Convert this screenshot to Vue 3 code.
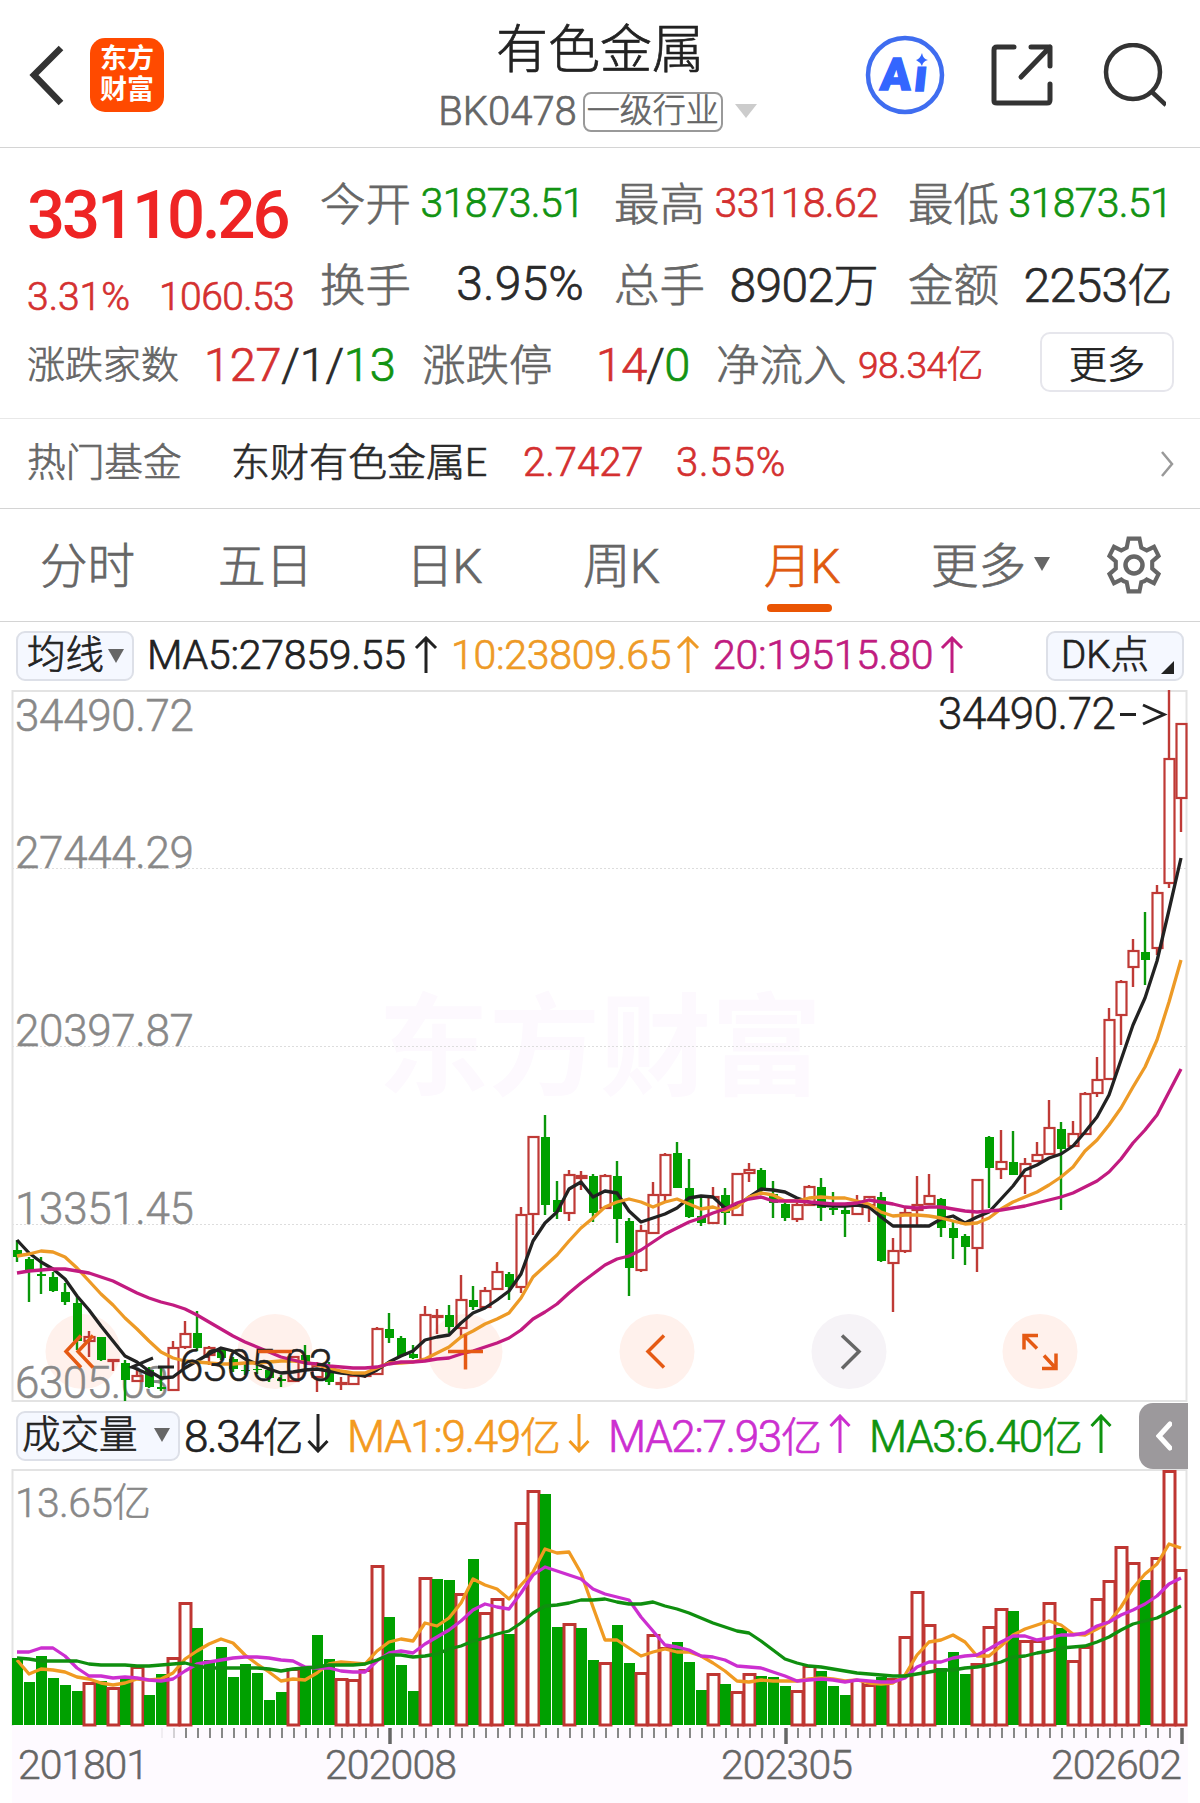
<script setup>
import { ref } from 'vue'

const stats = [
  { label: '今开', value: '31873.51', color: 'green', small: true },
  { label: '最高', value: '33118.62', color: 'red', small: true },
  { label: '最低', value: '31873.51', color: 'green', small: true },
  { label: '换手', value: '3.95%', wide: true },
  { label: '总手', value: '8902', unit: '万' },
  { label: '金额', value: '2253', unit: '亿' }
]

const tabs = [
  { name: 'minute', label: '分时' },
  { name: 'five', label: '五日' },
  { name: 'day', label: '日K' },
  { name: 'week', label: '周K' },
  { name: 'month', label: '月K' },
  { name: 'more', label: '更多', caret: true }
]
const selectedTab = ref('month')

const maList = [
  { text: 'MA5:27859.55', color: '#222', width: 267 },
  { text: '10:23809.65', color: '#ee9a26', width: 225 },
  { text: '20:19515.80', color: '#c01c80', width: 227 }
]

const volList = [
  { text: '8.34', color: '#222', width: 123, down: true },
  { text: 'MA1:9.49', color: '#f39a1e', width: 221, down: true },
  { text: 'MA2:7.93', color: '#cc2fd0', width: 221 },
  { text: 'MA3:6.40', color: '#0f930f', width: 221 }
]

// up flag, high, body top, body bottom, low
const candles = [
  [0, 1240, 1250, 1257, 1262], [0, 1257, 1259, 1271, 1302], [0, 1257, 1274, 1276, 1294], [0, 1272, 1277, 1291, 1292],
  [0, 1283, 1292, 1302, 1305], [0, 1297, 1303, 1341, 1350], [1, 1331, 1337, 1341, 1357], [0, 1337, 1337, 1360, 1361],
  [1, 1359, 1360, 1361, 1371], [0, 1360, 1363, 1380, 1401], [1, 1370, 1376, 1381, 1382], [0, 1367, 1370, 1387, 1388],
  [0, 1366, 1387, 1389, 1391], [1, 1341, 1348, 1390, 1390], [1, 1321, 1334, 1347, 1349], [0, 1311, 1333, 1348, 1351],
  [1, 1346, 1348, 1355, 1365], [0, 1348, 1349, 1358, 1360], [0, 1357, 1359, 1369, 1372], [0, 1364, 1370, 1371, 1375],
  [0, 1363, 1369, 1370, 1374], [0, 1367, 1370, 1378, 1382], [0, 1375, 1379, 1381, 1387], [1, 1356, 1357, 1381, 1382],
  [0, 1345, 1355, 1362, 1364], [1, 1362, 1366, 1377, 1392], [0, 1362, 1371, 1382, 1385], [1, 1377, 1383, 1384, 1390],
  [1, 1375, 1376, 1384, 1385], [1, 1374, 1375, 1376, 1378], [1, 1327, 1329, 1374, 1374], [0, 1313, 1329, 1338, 1343],
  [0, 1336, 1338, 1356, 1357], [0, 1345, 1354, 1358, 1359], [1, 1306, 1315, 1359, 1359], [1, 1309, 1316, 1317, 1334],
  [0, 1305, 1315, 1327, 1333], [1, 1275, 1300, 1328, 1338], [0, 1286, 1300, 1307, 1310], [1, 1287, 1291, 1307, 1307],
  [1, 1262, 1272, 1289, 1289], [0, 1272, 1274, 1287, 1300], [1, 1207, 1215, 1287, 1293], [1, 1137, 1137, 1214, 1235],
  [0, 1115, 1137, 1205, 1215], [0, 1181, 1200, 1212, 1219], [1, 1170, 1175, 1213, 1221], [1, 1171, 1176, 1178, 1190],
  [0, 1174, 1176, 1213, 1222], [1, 1174, 1176, 1208, 1209], [0, 1161, 1176, 1219, 1243], [0, 1218, 1221, 1268, 1296],
  [1, 1225, 1231, 1270, 1272], [1, 1182, 1195, 1233, 1234], [1, 1153, 1155, 1195, 1201], [0, 1142, 1153, 1188, 1188],
  [0, 1159, 1188, 1217, 1218], [0, 1197, 1216, 1223, 1226], [1, 1187, 1197, 1223, 1224], [0, 1188, 1195, 1213, 1225],
  [1, 1174, 1174, 1215, 1215], [1, 1163, 1170, 1173, 1182], [0, 1168, 1170, 1190, 1193], [0, 1181, 1194, 1203, 1218],
  [0, 1202, 1204, 1218, 1221], [1, 1200, 1205, 1219, 1222], [1, 1185, 1187, 1205, 1206], [0, 1178, 1187, 1208, 1221],
  [0, 1192, 1208, 1210, 1215], [0, 1206, 1210, 1214, 1237], [1, 1195, 1205, 1214, 1215], [1, 1196, 1197, 1205, 1222],
  [0, 1192, 1197, 1261, 1262], [1, 1238, 1251, 1263, 1312], [1, 1208, 1213, 1251, 1253], [1, 1176, 1205, 1210, 1227],
  [1, 1174, 1196, 1204, 1205], [0, 1198, 1199, 1228, 1237], [0, 1220, 1228, 1238, 1259], [0, 1234, 1236, 1247, 1265],
  [1, 1180, 1180, 1248, 1272], [0, 1136, 1137, 1168, 1208], [1, 1130, 1162, 1169, 1179], [0, 1131, 1162, 1175, 1175],
  [1, 1158, 1164, 1176, 1194], [1, 1142, 1155, 1161, 1162], [1, 1100, 1128, 1154, 1154], [0, 1122, 1129, 1149, 1210],
  [1, 1121, 1134, 1146, 1147], [1, 1092, 1094, 1134, 1134], [1, 1057, 1080, 1093, 1097], [1, 1008, 1020, 1079, 1079],
  [1, 980, 982, 1015, 1045], [1, 939, 951, 967, 987], [0, 912, 952, 960, 985], [1, 885, 893, 948, 955],
  [1, 690, 759, 883, 888], [1, 724, 724, 798, 832]
]

const ma5 = [
  1240, 1253, 1262, 1269, 1279, 1296, 1310, 1326, 1341, 1356, 1362, 1371, 1378, 1377, 1368, 1361, 1354, 1348, 1351, 1359,
  1364, 1369, 1373, 1372, 1370, 1369, 1371, 1373, 1374, 1376, 1370, 1362, 1356, 1351, 1340, 1337, 1335, 1323, 1313, 1308,
  1300, 1291, 1274, 1241, 1223, 1212, 1189, 1182, 1197, 1191, 1193, 1211, 1222, 1218, 1214, 1208, 1198, 1196, 1197, 1208,
  1206, 1197, 1189, 1190, 1192, 1198, 1202, 1205, 1206, 1206, 1205, 1207, 1217, 1226, 1226, 1226, 1226, 1219, 1216, 1223,
  1217, 1212, 1199, 1186, 1170, 1165, 1158, 1154, 1146, 1132, 1117, 1095, 1060, 1025, 998, 961, 910, 858
]
const ma10 = [
  1256, 1254, 1251, 1252, 1257, 1268, 1281, 1294, 1305, 1318, 1329, 1341, 1352, 1358, 1361, 1362, 1363, 1364, 1364, 1363,
  1363, 1362, 1361, 1361, 1362, 1365, 1368, 1371, 1373, 1373, 1368, 1363, 1363, 1362, 1359, 1353, 1347, 1337, 1331, 1324,
  1319, 1313, 1298, 1277, 1266, 1255, 1241, 1228, 1218, 1207, 1202, 1199, 1202, 1207, 1202, 1199, 1204, 1209, 1207, 1211,
  1207, 1197, 1193, 1195, 1201, 1201, 1198, 1197, 1198, 1198, 1201, 1204, 1212, 1216, 1215, 1215, 1216, 1218, 1221, 1224,
  1223, 1218, 1209, 1202, 1197, 1192, 1185, 1177, 1167, 1151, 1140, 1125, 1108, 1087, 1067, 1040, 1002, 960
]
const ma20 = [
  1273, 1271, 1270, 1269, 1269, 1271, 1273, 1277, 1281, 1287, 1293, 1298, 1302, 1305, 1309, 1315, 1322, 1329, 1336, 1342,
  1347, 1352, 1357, 1360, 1363, 1364, 1366, 1367, 1368, 1368, 1367, 1364, 1362, 1362, 1361, 1359, 1358, 1354, 1351, 1347,
  1343, 1338, 1330, 1319, 1312, 1304, 1293, 1283, 1274, 1265, 1259, 1256, 1250, 1242, 1234, 1228, 1222, 1218, 1213, 1209,
  1203, 1199, 1197, 1201, 1201, 1201, 1202, 1203, 1204, 1204, 1203, 1200, 1202, 1204, 1207, 1208, 1207, 1207, 1209, 1211,
  1212, 1211, 1210, 1208, 1206, 1203, 1200, 1197, 1193, 1187, 1181, 1172, 1159, 1143, 1130, 1115, 1092, 1069
]

// top of each volume bar, and whether it is a rising month
const volTops = [
  1658, 1682, 1656, 1678, 1685, 1691, 1682, 1681, 1687, 1677, 1666, 1695, 1674, 1657, 1602, 1628, 1660, 1647, 1677, 1664,
  1673, 1700, 1692, 1668, 1669, 1635, 1659, 1678, 1679, 1669, 1565, 1617, 1665, 1691, 1577, 1579, 1580, 1593, 1559, 1612,
  1598, 1634, 1522, 1490, 1494, 1627, 1623, 1628, 1660, 1662, 1625, 1663, 1672, 1634, 1647, 1642, 1662, 1690, 1673, 1684,
  1691, 1673, 1676, 1677, 1686, 1690, 1665, 1671, 1686, 1695, 1679, 1684, 1677, 1678, 1636, 1591, 1624, 1668, 1652, 1674,
  1663, 1626, 1608, 1611, 1640, 1640, 1602, 1628, 1660, 1646, 1598, 1580, 1546, 1562, 1580, 1557, 1470, 1569
]
const volUp = [
  6, 8, 10, 13, 14, 23, 27, 28, 29, 30, 34, 37, 39, 40, 42, 43, 46, 49, 52, 53, 54, 58, 60, 61, 65, 66, 70, 71, 73, 74, 75,
  76, 80, 81, 82, 84, 85, 86, 88, 89, 90, 91, 92, 93, 95, 96, 97
]
const volMa1 = [
  1660, 1674, 1669, 1670, 1672, 1677, 1679, 1683, 1685, 1683, 1679, 1680, 1679, 1673, 1659, 1651, 1644, 1639, 1643, 1655,
  1664, 1672, 1681, 1679, 1680, 1673, 1664, 1662, 1663, 1664, 1651, 1642, 1639, 1641, 1623, 1626, 1618, 1603, 1579, 1585,
  1589, 1599, 1585, 1572, 1549, 1553, 1552, 1573, 1607, 1640, 1640, 1648, 1656, 1652, 1649, 1652, 1652, 1656, 1663, 1671,
  1681, 1682, 1680, 1681, 1681, 1681, 1679, 1678, 1679, 1681, 1680, 1683, 1684, 1683, 1675, 1655, 1642, 1640, 1635, 1642,
  1656, 1656, 1646, 1635, 1629, 1625, 1621, 1625, 1634, 1635, 1629, 1622, 1607, 1588, 1574, 1564, 1544, 1548
]
const volMa2 = [
  1652, 1652, 1648, 1648, 1656, 1668, 1676, 1676, 1678, 1677, 1678, 1680, 1681, 1679, 1671, 1664, 1662, 1660, 1658, 1657,
  1657, 1658, 1660, 1661, 1667, 1668, 1668, 1671, 1672, 1672, 1661, 1653, 1651, 1653, 1644, 1637, 1630, 1621, 1610, 1604,
  1607, 1609, 1593, 1575, 1567, 1571, 1575, 1579, 1589, 1594, 1597, 1600, 1617, 1631, 1645, 1647, 1650, 1656, 1657, 1660,
  1666, 1667, 1668, 1672, 1676, 1681, 1680, 1679, 1680, 1682, 1680, 1681, 1682, 1682, 1678, 1667, 1662, 1662, 1658, 1656,
  1655, 1649, 1642, 1636, 1636, 1640, 1638, 1635, 1635, 1633, 1626, 1622, 1615, 1610, 1604, 1596, 1584, 1578
]
const volMa3 = [
  1658, 1659, 1661, 1661, 1661, 1661, 1664, 1665, 1665, 1665, 1666, 1666, 1665, 1664, 1663, 1666, 1668, 1668, 1668, 1668,
  1668, 1669, 1671, 1669, 1668, 1667, 1665, 1665, 1665, 1664, 1660, 1655, 1655, 1657, 1656, 1654, 1649, 1646, 1641, 1638,
  1634, 1631, 1623, 1613, 1606, 1605, 1603, 1600, 1600, 1599, 1602, 1604, 1604, 1602, 1606, 1609, 1613, 1618, 1623, 1627,
  1631, 1633, 1641, 1650, 1659, 1663, 1666, 1667, 1669, 1671, 1673, 1674, 1675, 1676, 1676, 1674, 1672, 1670, 1670, 1668,
  1667, 1665, 1662, 1657, 1656, 1653, 1651, 1648, 1647, 1646, 1642, 1637, 1630, 1624, 1621, 1618, 1612, 1606
]

const cx = (i) => 17 + i * 12
const line = (values) => values.map((y, i) => `${cx(i)},${y}`).join(' ')

const priceLabels = [
  { text: '34490.72', y: 731, w: 176 },
  { text: '27444.29', y: 868, w: 176 },
  { text: '20397.87', y: 1046, w: 176 },
  { text: '13351.45', y: 1224, w: 176 },
  { text: '6305.03', y: 1398, w: 151 }
]

const tools = [
  { x: 83, path: 'M-2 -16L-17 0L-2 16M10 -16L-5 0L10 16' },
  { x: 275, path: 'M-17 0H17' },
  { x: 465, path: 'M-17 0H18M0.5 -17V18' },
  { x: 657, path: 'M7 -16L-9 0L7 16' },
  { x: 849, path: 'M-7 -16L10 0L-7 17', muted: true },
  { x: 1040, path: 'M-16 -2V-16H-2M-16 -16L-3 -3M2 17H16V2M4 4L16 17' }
]

const ticks = Array.from({ length: 86 }, (_, i) => i + 12)
const majorTicks = [31, 64, 97]
</script>

<template>
  <div class="page">
    <header class="header">
      <div class="header__left">
        <svg class="header__back" width="40" height="64" viewBox="0 0 40 64">
          <path d="M35 5L8 32L35 60" fill="none" stroke="#333" stroke-width="6.5" />
        </svg>
        <div class="logo"><span>东方</span><span>财富</span></div>
      </div>
      <div class="header__title">
        <h1>有色金属</h1>
        <div class="header__sub">
          <span>BK0478</span>
          <span class="tag">一级行业</span>
          <svg width="24" height="16" viewBox="0 0 24 16"><path d="M1 1H23L12 15Z" fill="#ccc" /></svg>
        </div>
      </div>
      <div class="header__icons">
        <svg width="80" height="80" viewBox="0 0 80 80">
          <circle cx="40" cy="40" r="37" fill="none" stroke="#3f6df0" stroke-width="4.5" />
          <text class="ai" transform="translate(14.500 55) skewX(-4)">A</text>
          <text class="ai" transform="translate(48 56) skewX(-6)">ı</text>
          <path fill="#3366ff" d="M57 18Q58 24 63 25Q58 26 57 31Q55 27 51 25Q55 24 57 18Z" />
        </svg>
        <svg width="64" height="64" viewBox="0 0 64 64">
          <g fill="none" stroke="#333" stroke-width="5" stroke-linecap="round" stroke-linejoin="round">
            <path d="M24 4H7Q4 4 4 7V58Q4 60 7 60H57Q60 60 60 57V41" />
            <path d="M41 4H60V23M60 4L31 34" />
          </g>
        </svg>
        <svg width="64" height="64" viewBox="0 0 64 64">
          <g fill="none" stroke="#333" stroke-width="4.500">
            <circle cx="31" cy="29" r="27" />
            <path d="M50 49L64 62" />
          </g>
        </svg>
      </div>
    </header>

    <section class="quote">
      <div class="quote__top">
        <div class="price">
          <div class="price__now">33110.26</div>
          <div class="price__change"><span>3.31%</span><span class="price__diff">1060.53</span></div>
        </div>
        <div class="stats">
          <div v-for="item in stats" :key="item.label" class="stats__item">
            <span class="stats__label">{{ item.label }}</span>
            <span :class="['stats__value', item.color, { small: item.small, wide: item.wide }]"
              >{{ item.value }}<i v-if="item.unit">{{ item.unit }}</i></span
            >
          </div>
        </div>
      </div>
      <div class="quote__bottom">
        <span class="count-label">涨跌家数</span>
        <span class="count"><b class="red">127</b>/1/<b class="green">13</b></span>
        <span class="limit-label">涨跌停</span>
        <span class="limit"><b class="red">14</b>/<b class="green">0</b></span>
        <span class="limit-label flow-label">净流入</span>
        <span class="flow red">98.34<i>亿</i></span>
        <button class="more">更多</button>
      </div>
    </section>

    <section class="fund">
      <span class="fund__label">热门基金</span>
      <span class="fund__name">东财有色金属E</span>
      <span class="fund__net red">2.7427</span>
      <span class="fund__rate red">3.55%</span>
      <svg class="fund__arrow" width="14" height="28" viewBox="0 0 14 28">
        <path d="M2 2L12 14L2 26" fill="none" stroke="#999" stroke-width="2.500" />
      </svg>
    </section>

    <nav class="tabs">
      <span
        v-for="tab in tabs"
        :key="tab.name"
        :class="['tabs__item', `tabs__item--${tab.name}`, { selected: tab.name === selectedTab }]"
        @click="selectedTab = tab.name"
        >{{ tab.label }}<svg v-if="tab.caret" class="tabs__caret" width="18" height="14" viewBox="0 0 18 14">
          <path d="M1 0H17L9 14Z" fill="#666" />
        </svg>
      </span>
      <svg class="tabs__gear" width="56" height="64" viewBox="-28 -32 56 64">
        <g fill="none" stroke="#666" stroke-width="4.500">
          <path
            d="M-6 -29H6L8 -19Q12 -17 14 -16L22 -20L27 -10L20 -4V4L27 10L22 20L14 16Q12 18 8 19L6 29H-6L-8 19Q-12 18 -14 16L-22 20L-27 10L-20 4V-4L-27 -10L-22 -20L-14 -16Q-12 -17 -8 -19Z"
            transform="scale(0.910)"
          />
          <circle r="8.500" />
        </g>
      </svg>
    </nav>

    <div class="indicator">
      <span class="pill pill--ma">均线<svg width="16" height="14" viewBox="0 0 16 14"><path d="M0 0H16L8 14Z" fill="#666" /></svg></span>
      <span v-for="ma in maList" :key="ma.text" class="indicator__ma" :style="{ color: ma.color }">
        <span :style="{ width: ma.width + 'px' }">{{ ma.text }}</span>
        <svg width="24" height="38" viewBox="0 0 24 38">
          <path d="M12 37V2M2 12L12 2L22 12" fill="none" stroke="currentColor" stroke-width="3" />
        </svg>
      </span>
      <span class="pill pill--dk">DK点<svg width="13" height="13" viewBox="0 0 13 13"><path d="M13 0V13H0Z" fill="#222" /></svg></span>
    </div>

    <svg class="chart" width="1200" height="712" viewBox="0 690 1200 712">
      <text class="watermark" x="378" y="1087" textLength="444">东方财富</text>
      <path d="M12 868.500H1187M12 1046.500H1187M12 1224.500H1187" stroke="#ddd" stroke-dasharray="2 2" />
      <rect x="12.500" y="691" width="1174" height="710" fill="none" stroke="#e3e3e3" stroke-width="2" />
      <circle v-for="tool in tools" :key="tool.x" :cx="tool.x" cy="1351.500" r="37.500" :fill="tool.muted ? '#f6f3f7' : '#fff1ec'" />
      <text
        v-for="label in priceLabels"
        :key="label.text"
        class="axis-label"
        x="15"
        :y="label.y"
        :textLength="label.w + 3"
        >{{ label.text }}</text
      >
      <g v-for="(c, i) in candles" :key="i">
        <template v-if="c[0]">
          <path :d="`M${cx(i)} ${c[1]}V${c[2]}M${cx(i)} ${c[3]}V${c[4]}`" stroke="#bf3a36" stroke-width="2.400" />
          <rect :x="cx(i) - 4.500" :y="c[2]" width="10" :height="c[3] - c[2]" fill="none" stroke="#bf3a36" stroke-width="2.200" />
        </template>
        <template v-else>
          <path :d="`M${cx(i)} ${c[1]}V${c[4]}`" stroke="#0a970a" stroke-width="2.400" />
          <rect :x="cx(i) - 4" :y="c[2]" width="9" :height="c[3] - c[2]" fill="#00a000" />
        </template>
      </g>
      <g fill="none" stroke-width="3.300" stroke-linejoin="round">
        <polyline :points="line(ma5)" stroke="#222" />
        <polyline :points="line(ma10)" stroke="#ed9a26" />
        <polyline :points="line(ma20)" stroke="#c21b80" />
      </g>
      <text class="mark" x="938" y="729" textLength="178">34490.72</text>
      <path d="M1120 714.500H1136M1143 705L1164 714.500L1143 724" fill="none" stroke="#222" stroke-width="3" />
      <text class="mark" x="179" y="1381" textLength="154">6305.03</text>
      <path d="M158 1367H174M153 1358L132 1367L153 1376" fill="none" stroke="#222" stroke-width="3" />
      <path
        v-for="tool in tools"
        :key="tool.path"
        :d="tool.path"
        :transform="`translate(${tool.x} 1351.5)`"
        fill="none"
        :stroke="tool.muted ? '#666' : '#e55a14'"
        stroke-width="3.500"
      />
    </svg>

    <div class="volume-bar">
      <span class="pill pill--vol">成交量<svg width="16" height="14" viewBox="0 0 16 14"><path d="M0 0H16L8 14Z" fill="#666" /></svg></span>
      <span v-for="v in volList" :key="v.text" class="volume-bar__item" :style="{ color: v.color }">
        <span :style="{ width: v.width + 'px' }">{{ v.text }}<i>亿</i></span>
        <svg width="22" height="39" viewBox="0 0 22 39">
          <path v-if="v.down" d="M11 0V37M1.500 27L11 37L20.500 27" fill="none" stroke="currentColor" stroke-width="3" />
          <path v-else d="M11 39V2M1.500 12L11 2L20.500 12" fill="none" stroke="currentColor" stroke-width="3" />
        </svg>
      </span>
      <button class="drawer">
        <svg width="16" height="30" viewBox="0 0 16 30">
          <path d="M14 3L3 15L14 27" fill="none" stroke="#fff" stroke-width="5" stroke-linecap="round" />
        </svg>
      </button>
    </div>

    <svg class="chart" width="1200" height="334" viewBox="0 1469 1200 334">
      <rect x="12" y="1726" width="1176" height="77" fill="#fefaff" />
      <path d="M12.500 1726V1470H1186.500V1726" fill="none" stroke="#e3e3e3" stroke-width="2" />
      <text class="axis-label axis-label--vol" x="15" y="1517" textLength="98">13.65</text>
      <text class="axis-label axis-label--unit" x="112" y="1516">亿</text>
      <template v-for="(top, i) in volTops" :key="i">
        <rect
          v-if="volUp.includes(i)"
          :x="cx(i) - 5"
          :y="top + 1.500"
          :width="i === 97 ? 10 : 11"
          :height="1723.500 - top"
          fill="#fff"
          stroke="#bf3632"
          stroke-width="3"
        />
        <rect v-else :x="cx(i) - 5" :y="top" width="11" :height="1725 - top" fill="#00a000" />
      </template>
      <g fill="none" stroke-width="3.300" stroke-linejoin="round">
        <polyline :points="line(volMa1)" stroke="#f09a22" />
        <polyline :points="line(volMa2)" stroke="#cc2fd0" />
        <polyline :points="line(volMa3)" stroke="#0f8f0f" />
      </g>
      <path v-for="t in ticks" :key="t" :d="`M${18 + t * 12} 1728V1738`" stroke="#888" stroke-width="2" :opacity="t === 12 ? 0.1 : t === 13 ? 0.35 : 1" />
      <path v-for="t in majorTicks" :key="t" :d="`M${18 + t * 12} 1728V1744`" stroke="#666" stroke-width="3.500" />
      <g class="dates">
        <text x="18" y="1779" textLength="131">201801</text>
        <text x="325" y="1779" textLength="132">202008</text>
        <text x="721" y="1779" textLength="132">202305</text>
        <text x="1051" y="1779" textLength="131">202602</text>
      </g>
    </svg>
  </div>
</template>

<style>
body {
  margin: 0;
  background: #fff;
}
</style>

<style scoped>
.page {
  width: 1200px;
  height: 1803px;
  overflow: hidden;
  background: #fff;
  color: #2a2a2a;
  font-family: Roboto, 'Noto Sans CJK SC', sans-serif;
  font-weight: 300;
  -webkit-text-stroke: 0.700px currentColor;
}

svg {
  display: block;
  flex: none;
}

i,
b {
  font-style: normal;
  font-weight: inherit;
}

.red {
  color: #d43030;
}

.green {
  color: #129312;
}

.header {
  box-sizing: border-box;
  display: grid;
  grid-template-columns: 400px 400px 400px;
  height: 148px;
  border-bottom: 1px solid #d4d4d4;
}

.header__left {
  display: flex;
  align-items: center;
  height: 150px;
  padding-left: 26px;
}

.logo {
  display: flex;
  flex-direction: column;
  align-items: center;
  justify-content: center;
  width: 74px;
  height: 74px;
  margin-left: 24px;
  border-radius: 15px;
  background: #ff4a00;
  color: #fff;
  font-size: 27px;
  font-weight: 700;
  line-height: 31px;
  -webkit-text-stroke: 0;
}

.header__title {
  display: flex;
  flex-direction: column;
  align-items: center;
}

h1 {
  margin: 15px 0 0;
  font-size: 52px;
  font-weight: 300;
  line-height: 71px;
  color: #222;
}

.header__sub {
  display: flex;
  align-items: center;
  height: 50px;
  padding-right: 4px;
  font-size: 40px;
  color: #666;
}

.tag {
  box-sizing: border-box;
  width: 140px;
  height: 40px;
  margin: 1px 11px 0 6px;
  border: 2px solid #999;
  border-radius: 8px;
  font-size: 33px;
  line-height: 34px;
  text-align: center;
}

.header__icons {
  display: flex;
  align-items: center;
  height: 150px;
  padding-left: 65px;
}

.header__icons svg:nth-child(2) {
  margin: 0 48px 0 45px;
}

.ai {
  font-size: 45px;
  font-weight: 900;
  fill: #36f;
  stroke: #36f;
  stroke-width: 1.500px;
}

.quote {
  box-sizing: border-box;
  height: 271px;
  padding: 14px 26px 0 27px;
  border-bottom: 1px solid #e8e8e8;
}

.quote__top {
  display: flex;
  height: 162px;
}

.price {
  width: 293px;
}

.price__now {
  height: 94px;
  margin-top: 6px;
  font-size: 67px;
  font-weight: 500;
  line-height: 94px;
  letter-spacing: -3.100px;
  color: #ee2424;
  -webkit-text-stroke: 0;
}

.price__change {
  font-size: 39px;
  line-height: 70px;
  color: #d43030;
}

.price__diff {
  margin-left: 29px;
  letter-spacing: -0.600px;
}

.stats {
  display: grid;
  grid-template-columns: repeat(3, 264px);
  column-gap: 30px;
  grid-auto-rows: 81px;
}

.stats__item {
  display: flex;
  align-items: center;
  justify-content: space-between;
  white-space: nowrap;
}

.stats__label {
  padding-bottom: 4px;
  font-size: 45.500px;
  color: #666;
}

.stats__value {
  padding-bottom: 3px;
  font-size: 48px;
  letter-spacing: -0.600px;
}

.stats__value i {
  font-size: 45px;
}

.stats__value.wide {
  padding-bottom: 1px;
  letter-spacing: 0.200px;
}

.stats__value.small {
  padding-bottom: 0;
  font-size: 41px;
  letter-spacing: -0.700px;
}

.quote__bottom {
  display: flex;
  align-items: center;
  height: 76px;
  white-space: nowrap;
}

.count-label {
  width: 177px;
  padding-bottom: 1px;
  font-size: 38px;
  color: #666;
}

.count,
.limit {
  padding-top: 4px;
  font-size: 47px;
  letter-spacing: -0.300px;
}

.count {
  width: 218px;
}

.limit-label {
  width: 174px;
  font-size: 43.500px;
  color: #666;
}

.limit {
  width: 120px;
  letter-spacing: -0.900px;
}

.flow-label {
  width: 142px;
}

.flow {
  font-size: 37px;
  letter-spacing: -0.500px;
}

.more {
  box-sizing: border-box;
  width: 134px;
  height: 60px;
  margin-left: auto;
  padding: 0 0 8px;
  border: 2px solid #e6e6ec;
  border-radius: 10px;
  background: #fff;
  color: #222;
  font: 300 38px 'Noto Sans CJK SC', sans-serif;
  -webkit-text-stroke: 0.700px currentColor;
}

.fund {
  box-sizing: border-box;
  display: flex;
  align-items: center;
  height: 90px;
  padding: 0 26px 0 27px;
  border-bottom: 1px solid #d4d4d4;
  font-size: 40px;
}

.fund__label {
  width: 204px;
  padding-bottom: 9px;
  font-size: 38.700px;
  color: #666;
}

.fund__name {
  width: 292px;
  padding-bottom: 9px;
  font-size: 39px;
}

.fund__net {
  width: 153px;
  padding-bottom: 3px;
}

.fund__rate {
  padding-bottom: 3px;
  letter-spacing: 0.900px;
}

.fund__arrow {
  margin-left: auto;
}

.tabs {
  box-sizing: border-box;
  display: flex;
  height: 113px;
  padding-left: 40px;
  border-bottom: 1px solid #d4d4d4;
}

.tabs__item {
  box-sizing: border-box;
  position: relative;
  display: flex;
  align-items: center;
  width: 178px;
  height: 111px;
  padding-bottom: 5px;
  font-size: 47.500px;
  color: #666;
  cursor: pointer;
}

.tabs__item--five {
  width: 188px;
}

.tabs__item--day {
  width: 177px;
}

.tabs__item--week {
  width: 181px;
  letter-spacing: -0.500px;
}

.tabs__item--day,
.tabs__item--month {
  letter-spacing: -1px;
}

.tabs__item--month {
  width: 167px;
}

.tabs__item--more {
  width: 175px;
}

.tabs__item.selected {
  color: #e05a10;
}

.tabs__item.selected::after {
  content: '';
  position: absolute;
  bottom: 8px;
  left: 3px;
  width: 65px;
  height: 8px;
  border-radius: 4px;
  background: #ea5504;
}

.tabs__caret {
  margin: 4px 0 0 7px;
}

.tabs__gear {
  margin-top: 24px;
}

.indicator,
.volume-bar {
  display: flex;
  align-items: center;
  height: 68px;
  white-space: nowrap;
}

.indicator {
  padding: 0 16px;
  font-size: 41px;
}

.indicator__ma {
  display: flex;
  align-items: center;
  margin: -2px 13px 0 0;
  letter-spacing: -0.250px;
}

.pill {
  box-sizing: border-box;
  display: flex;
  align-items: center;
  height: 50px;
  padding-bottom: 2px;
  border: 2px solid #dde0e8;
  border-radius: 9px;
  background: #f5f8ff;
  color: #222;
  font-size: 38.500px;
  line-height: 44px;
}

.pill--ma {
  width: 118px;
  margin-right: 13px;
  padding-left: 9px;
}

.pill--ma svg {
  margin: 1px 0 0 4px;
}

.pill--dk {
  width: 138px;
  margin-left: auto;
  padding-left: 13px;
}

.pill--dk svg {
  margin: 24px 0 0 12px;
}

.volume-bar {
  height: 67px;
  padding-left: 16px;
  font-size: 44px;
}

.pill--vol {
  width: 164px;
  margin-right: 4px;
  padding-left: 4px;
}

.pill--vol svg {
  margin: 1px 0 0 16px;
}

.volume-bar__item {
  display: flex;
  align-items: center;
  margin: -4px 18px 0 0;
  letter-spacing: -1.300px;
}

.volume-bar__item i {
  font-size: 41px;
}

.drawer {
  display: flex;
  align-items: center;
  justify-content: center;
  width: 49px;
  height: 66px;
  margin: 0 12px 0 auto;
  padding: 0;
  border: 0;
  border-radius: 14px 0 0 14px;
  background: #9c999c;
}

.chart {
  overflow: visible;
}

.axis-label {
  font-size: 44px;
  fill: #888;
  stroke: #888;
  stroke-width: 0.500px;
}

.axis-label--vol {
  font-size: 41px;
}

.axis-label--unit {
  font-size: 39px;
}

.mark {
  font-size: 44px;
  fill: #222;
  stroke: #222;
  stroke-width: 0.500px;
}

.watermark {
  font-size: 111px;
  font-weight: 700;
  fill: #fdf9fe;
}

.dates {
  font-size: 41px;
  fill: #666;
  stroke: #666;
  stroke-width: 0.500px;
}
</style>
